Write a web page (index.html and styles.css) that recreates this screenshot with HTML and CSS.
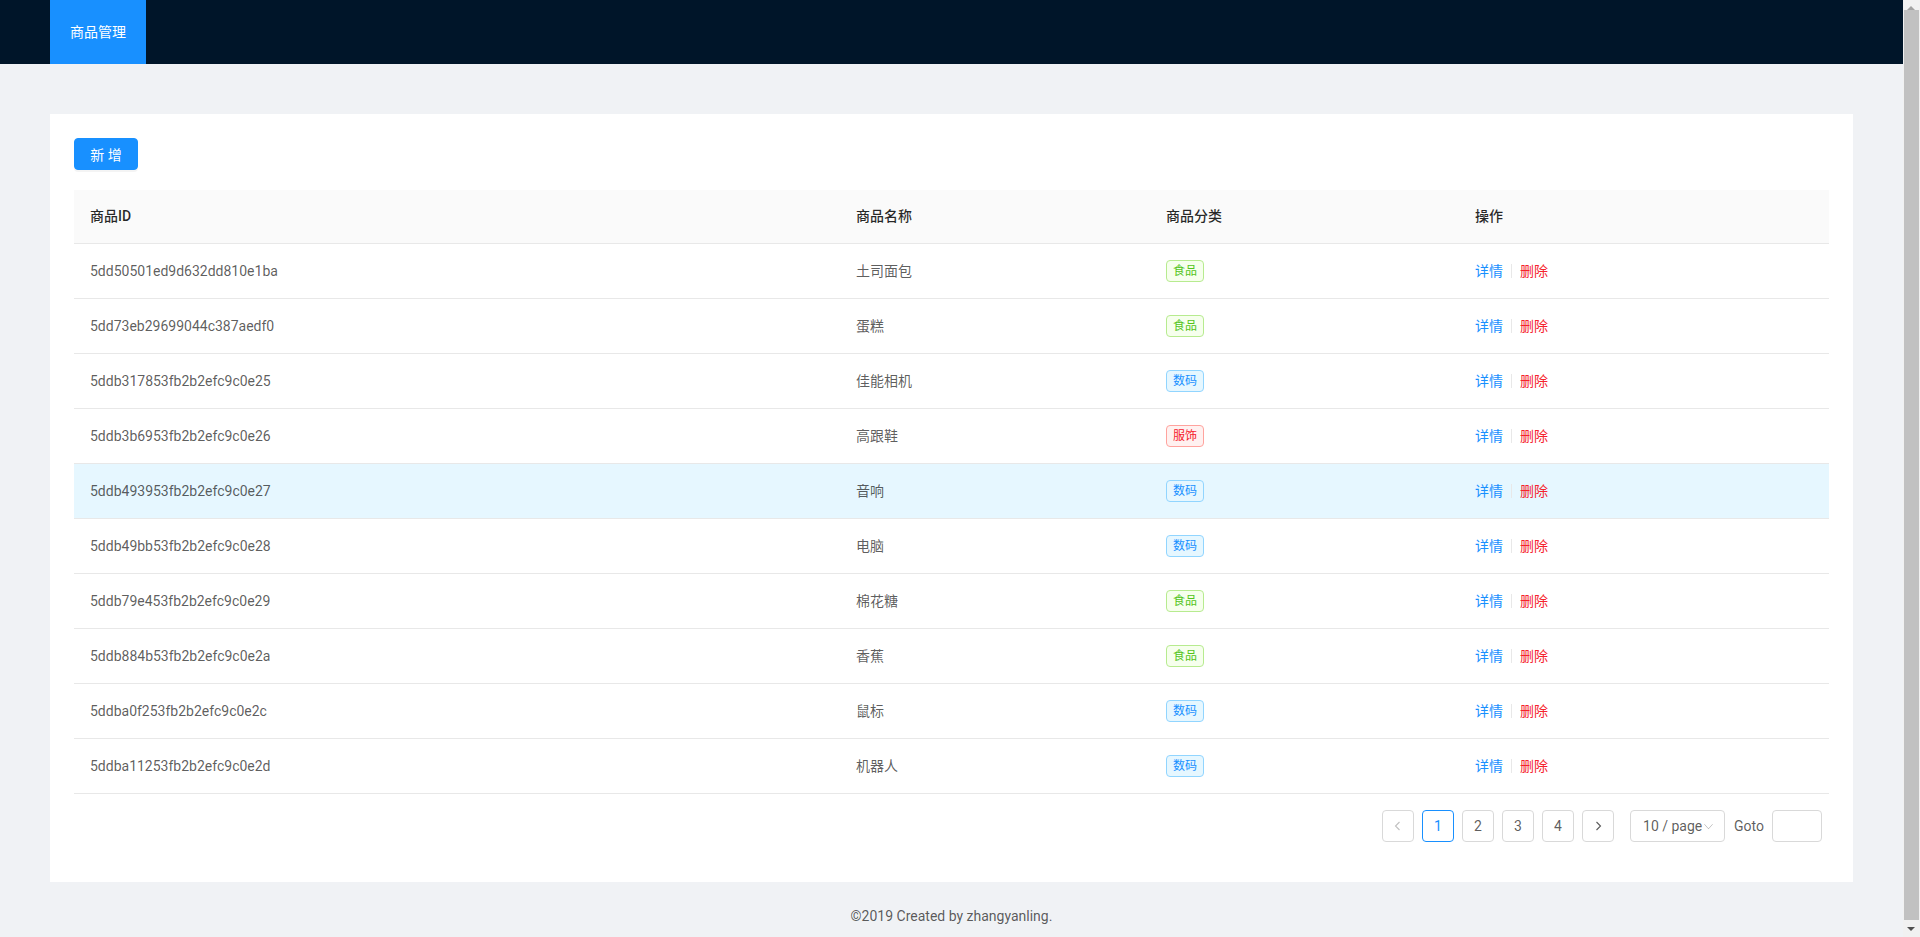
FILE: index.html
```html
<!DOCTYPE html>
<html lang="zh-CN">
<head>
<meta charset="utf-8">
<title>商品管理</title>
<link rel="stylesheet" href="styles.css">
</head>
<body>
<div class="layout">
  <header class="header">
    <nav class="menu">
      <a class="menu-item active">商品管理</a>
    </nav>
  </header>
  <main class="content">
    <section class="card">
      <button class="btn-primary">新 增</button>
      <table class="table">
        <thead>
          <tr>
            <th class="c-id">商品ID</th>
            <th class="c-name">商品名称</th>
            <th class="c-cat">商品分类</th>
            <th class="c-op">操作</th>
          </tr>
        </thead>
        <tbody>
          <tr><td>5dd50501ed9d632dd810e1ba</td><td>土司面包</td><td><span class="tag green">食品</span></td><td><a class="link">详情</a><i class="divider"></i><a class="link danger">删除</a></td></tr>
          <tr><td>5dd73eb29699044c387aedf0</td><td>蛋糕</td><td><span class="tag green">食品</span></td><td><a class="link">详情</a><i class="divider"></i><a class="link danger">删除</a></td></tr>
          <tr><td>5ddb317853fb2b2efc9c0e25</td><td>佳能相机</td><td><span class="tag blue">数码</span></td><td><a class="link">详情</a><i class="divider"></i><a class="link danger">删除</a></td></tr>
          <tr><td>5ddb3b6953fb2b2efc9c0e26</td><td>高跟鞋</td><td><span class="tag red">服饰</span></td><td><a class="link">详情</a><i class="divider"></i><a class="link danger">删除</a></td></tr>
          <tr class="hover"><td>5ddb493953fb2b2efc9c0e27</td><td>音响</td><td><span class="tag blue">数码</span></td><td><a class="link">详情</a><i class="divider"></i><a class="link danger">删除</a></td></tr>
          <tr><td>5ddb49bb53fb2b2efc9c0e28</td><td>电脑</td><td><span class="tag blue">数码</span></td><td><a class="link">详情</a><i class="divider"></i><a class="link danger">删除</a></td></tr>
          <tr><td>5ddb79e453fb2b2efc9c0e29</td><td>棉花糖</td><td><span class="tag green">食品</span></td><td><a class="link">详情</a><i class="divider"></i><a class="link danger">删除</a></td></tr>
          <tr><td>5ddb884b53fb2b2efc9c0e2a</td><td>香蕉</td><td><span class="tag green">食品</span></td><td><a class="link">详情</a><i class="divider"></i><a class="link danger">删除</a></td></tr>
          <tr><td>5ddba0f253fb2b2efc9c0e2c</td><td>鼠标</td><td><span class="tag blue">数码</span></td><td><a class="link">详情</a><i class="divider"></i><a class="link danger">删除</a></td></tr>
          <tr><td>5ddba11253fb2b2efc9c0e2d</td><td>机器人</td><td><span class="tag blue">数码</span></td><td><a class="link">详情</a><i class="divider"></i><a class="link danger">删除</a></td></tr>
        </tbody>
      </table>
      <div class="pagination">
        <span class="page-item disabled">
          <svg viewBox="0 0 12 12" width="12" height="12"><polyline points="7.5,2 3.5,6 7.5,10" fill="none" stroke="currentColor" stroke-width="1.1"/></svg>
        </span>
        <span class="page-item active">1</span>
        <span class="page-item">2</span>
        <span class="page-item">3</span>
        <span class="page-item">4</span>
        <span class="page-item">
          <svg viewBox="0 0 12 12" width="12" height="12"><polyline points="4.5,2 8.5,6 4.5,10" fill="none" stroke="currentColor" stroke-width="1.1"/></svg>
        </span>
        <div class="size-changer">
          <span>10 / page</span>
          <svg viewBox="0 0 12 12" width="11" height="11"><polyline points="1.5,3.5 6,8.5 10.5,3.5" fill="none" stroke="currentColor" stroke-width="1"/></svg>
        </div>
        <div class="jumper">
          <span>Goto</span>
          <span class="jumper-input"></span>
        </div>
      </div>
    </section>
  </main>
  <footer class="footer">©2019 Created by zhangyanling.</footer>
</div>
<div class="scrollbar" aria-hidden="true">
  <span class="sb-arrow up"></span>
  <span class="sb-thumb"></span>
  <span class="sb-arrow down"></span>
</div>
</body>
</html>
```

FILE: styles.css
```css
* { box-sizing: border-box; }
html, body { margin: 0; padding: 0; }
body {
  font-family: Roboto, "Noto Sans CJK SC", sans-serif;
  font-size: 14px;
  line-height: 1.5;
  color: rgba(0, 0, 0, 0.65);
  background: #f0f2f5;
}
.layout {
  min-height: 100vh;
  display: flex;
  flex-direction: column;
  margin-right: 17px;
}
.header {
  height: 64px;
  background: #001529;
  padding: 0 50px;
  display: flex;
}
.menu { display: flex; height: 64px; }
.menu-item {
  display: block;
  padding: 0 20px;
  line-height: 64px;
  color: #fff;
  font-size: 14px;
  background: #1890ff;
}
.content { padding: 50px 50px 0; }
.card {
  background: #fff;
  padding: 24px;
}
.btn-primary {
  display: block;
  width: 64px;
  height: 32px;
  border: 1px solid #1890ff;
  border-radius: 4px;
  background: #1890ff;
  color: #fff;
  font-family: Roboto, "Noto Sans CJK SC", sans-serif;
  font-size: 14px;
  padding: 0;
  margin: 0 0 20px;
  box-shadow: 0 2px 0 rgba(0, 0, 0, 0.045);
}
.table {
  width: 100%;
  border-collapse: collapse;
  table-layout: fixed;
}
.table th {
  background: #fafafa;
  color: rgba(0, 0, 0, 0.85);
  font-weight: 500;
  text-align: left;
  padding: 16px;
  border-bottom: 1px solid #e8e8e8;
  line-height: 21px;
}
.c-id { width: 766px; }
.c-name { width: 310px; }
.c-cat { width: 309px; }
.table td {
  padding: 16px;
  border-bottom: 1px solid #e8e8e8;
  line-height: 22px;
  white-space: nowrap;
}
.table tr.hover td { background: #e6f7ff; }
.tag {
  display: inline-block;
  font-size: 12px;
  line-height: 20px;
  padding: 0 6px;
  border: 1px solid;
  border-radius: 4px;
  vertical-align: top;
}
.tag.green { color: #52c41a; background: #f6ffed; border-color: #b7eb8f; }
.tag.blue { color: #1890ff; background: #e6f7ff; border-color: #91d5ff; }
.tag.red { color: #f5222d; background: #fff1f0; border-color: #ffa39e; }
.link { color: #1890ff; }
.link.danger { color: #f5222d; }
.divider {
  display: inline-block;
  width: 1px;
  height: 14px;
  margin: 0 8px;
  background: #e8e8e8;
  vertical-align: -2px;
}
.pagination {
  display: flex;
  justify-content: flex-end;
  align-items: center;
  margin: 16px 7px 16px 0;
  height: 32px;
}
.page-item {
  width: 32px;
  height: 32px;
  margin-right: 8px;
  border: 1px solid #d9d9d9;
  border-radius: 4px;
  display: flex;
  align-items: center;
  justify-content: center;
  color: rgba(0, 0, 0, 0.65);
  font-size: 14px;
  background: #fff;
}
.page-item.active { border-color: #1890ff; color: #1890ff; }
.page-item.disabled { color: rgba(0, 0, 0, 0.25); }
.size-changer {
  margin-left: 8px;
  width: 95px;
  height: 32px;
  border: 1px solid #d9d9d9;
  border-radius: 4px;
  display: flex;
  align-items: center;
  padding: 0 0 0 12px;
  color: rgba(0, 0, 0, 0.65);
}
.size-changer svg { color: rgba(0, 0, 0, 0.25); margin-left: 1px; }
.jumper {
  margin-left: 9px;
  display: flex;
  align-items: center;
}
.jumper-input {
  display: block;
  width: 50px;
  height: 32px;
  margin-left: 8px;
  border: 1px solid #d9d9d9;
  border-radius: 4px;
}
.footer {
  padding: 24px 50px;
  text-align: center;
  line-height: 21px;
}
.scrollbar {
  position: fixed;
  top: 0;
  right: 0;
  bottom: 0;
  width: 17px;
  background: #f1f1f1;
  display: flex;
  flex-direction: column;
  align-items: center;
}
.sb-arrow {
  height: 17px;
  width: 17px;
  flex: none;
  position: relative;
}
.sb-arrow::after {
  content: "";
  position: absolute;
  left: 4px;
  border-left: 4px solid transparent;
  border-right: 4px solid transparent;
}
.sb-arrow.up::after { top: 6px; border-bottom: 4px solid #a3a3a3; }
.sb-arrow.down::after { top: 7px; border-top: 4px solid #505050; }
.sb-thumb {
  flex: 1;
  margin: -7px 0 0;
  background: #c1c1c1;
  width: 15px;
}
```
